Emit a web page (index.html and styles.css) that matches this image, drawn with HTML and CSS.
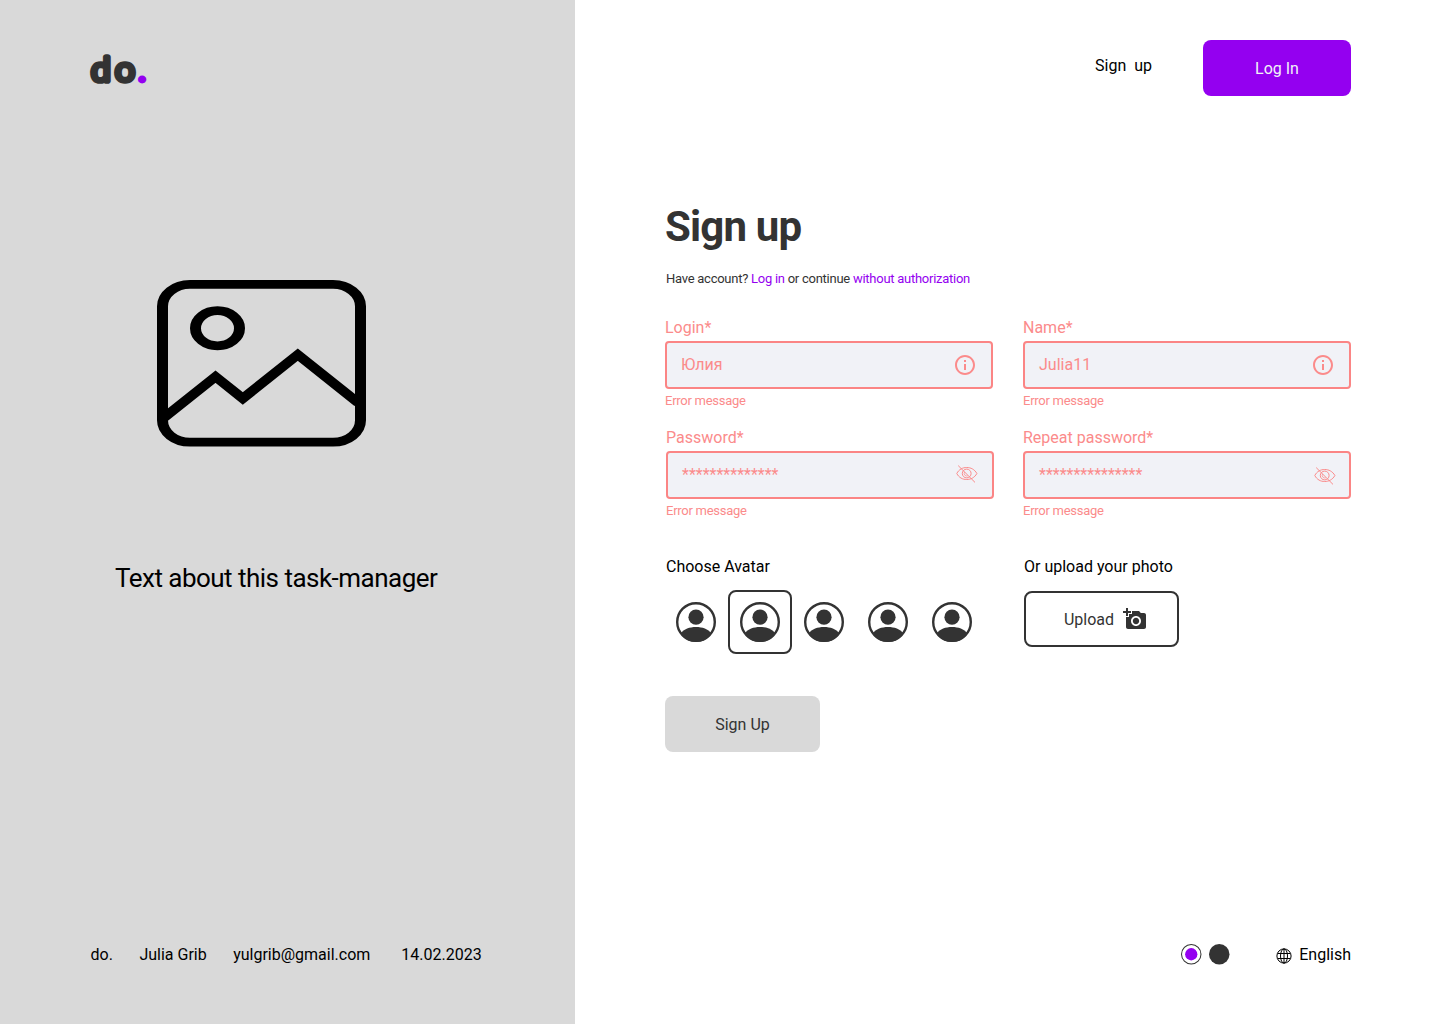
FILE: index.html
```html
<!DOCTYPE html>
<html lang="en">
<head>
<meta charset="utf-8">
<title>Sign up</title>
<link rel="stylesheet" href="styles.css">
</head>
<body>
<svg class="sprite" aria-hidden="true">
  <symbol id="info" viewBox="0 0 24 24"><path fill="currentColor" d="M11 7h2v2h-2zm0 4h2v6h-2zm1-9C6.480 2 2 6.480 2 12s4.480 10 10 10 10-4.480 10-10S17.520 2 12 2zm0 18c-4.410 0-8-3.590-8-8s3.590-8 8-8 8 3.590 8 8-3.590 8-8 8z"/></symbol>
  <symbol id="eye-off" viewBox="0 0 22 18"><g fill="none" stroke="currentColor"><path d="M.8 8.500C3 4.300 6.600 2.500 10.700 2.500S18.500 4.300 20.900 8.500c-2.400 4.200-6.100 6-10.200 6S3 12.700.8 8.500z"/><circle cx="10.700" cy="8.500" r="4.400"/><path stroke-width=".7" d="M8.600 7a2.600 2.600 0 0 0 3.200 3.800"/><path d="M2.200.6l16.800 16.800"/></g></symbol>
  <symbol id="avatar" viewBox="0 0 40 40"><circle cx="20" cy="20" r="18.800" fill="none" stroke="currentColor" stroke-width="2.400"/><circle cx="20" cy="15.200" r="7.600" fill="currentColor"/><path fill="currentColor" d="M4.500 31.500C8 27 13.500 25 20 25s12 2 15.500 6.500C32 37 26.500 40 20 40S8 37 4.500 31.500z"/></symbol>
</svg>
<div class="page">
  <aside class="intro">
    <svg class="logo" viewBox="0 0 60 36"><text class="logo-text" transform="scale(1.130 1.060)" x="1 22.400 42.500" y="27.700">do<tspan class="logo-dot">.</tspan></text></svg>
    <svg class="picture" viewBox="0 0 19 19" preserveAspectRatio="none"><g fill="none" stroke="#000"><rect x=".5" y=".5" width="18" height="18" rx="2.500"/><circle cx="5.500" cy="5.500" r="2"/><path d="M.5 15.850 5.320 11.030 7.800 13.510 12.800 8.510 18.300 14.010"/></g></svg>
    <p class="about">Text about this task-manager</p>
    <footer class="credits"><span>do.</span><span>Julia Grib</span><span>yulgrib@gmail.com</span><span>14.02.2023</span></footer>
  </aside>
  <main class="main">
    <nav class="nav"><a class="nav-link">Sign&nbsp; up</a><button class="btn primary">Log In</button></nav>
    <h1 class="title">Sign up</h1>
    <p class="hint">Have account? <a>Log in</a> or continue <a>without authorization</a></p>
    <form class="fields">
      <div class="field"><label>Login*</label><div class="input"><span>Юлия</span><svg class="info"><use href="#info"/></svg></div><small>Error message</small></div>
      <div class="field"><label>Name*</label><div class="input"><span>Julia11</span><svg class="info"><use href="#info"/></svg></div><small>Error message</small></div>
      <div class="field shifted"><label>Password*</label><div class="input"><span>**************</span><svg class="eye raised"><use href="#eye-off"/></svg></div><small>Error message</small></div>
      <div class="field"><label>Repeat password*</label><div class="input"><span>***************</span><svg class="eye low"><use href="#eye-off"/></svg></div><small>Error message</small></div>
    </form>
    <div class="photo">
      <section>
        <p class="caption">Choose Avatar</p>
        <div class="avatars">
          <div class="avatar"><svg><use href="#avatar"/></svg></div>
          <div class="avatar selected"><svg><use href="#avatar"/></svg></div>
          <div class="avatar"><svg><use href="#avatar"/></svg></div>
          <div class="avatar"><svg><use href="#avatar"/></svg></div>
          <div class="avatar"><svg><use href="#avatar"/></svg></div>
        </div>
      </section>
      <section>
        <p class="caption">Or upload your photo</p>
        <button class="btn upload">Upload<svg class="camera" viewBox="0 0 24 24"><path fill="currentColor" d="M3 4V1h2v3h3v2H5v3H3V6H0V4h3zm3 6V7h3V4h7l1.830 2H21c1.100 0 2 .9 2 2v12c0 1.100-.9 2-2 2H5c-1.100 0-2-.9-2-2V10h3zm7 9c2.760 0 5-2.240 5-5s-2.240-5-5-5-5 2.240-5 5 2.240 5 5 5zm-3.200-5c0 1.770 1.430 3.200 3.200 3.200s3.200-1.430 3.200-3.200-1.430-3.200-3.200-3.200-3.200 1.430-3.200 3.200z"/></svg></button>
      </section>
    </div>
    <button class="btn submit">Sign Up</button>
    <footer class="settings">
      <svg class="theme" viewBox="0 0 20 20"><circle cx="10" cy="10" r="9.500" fill="#fff" stroke="#333"/><circle cx="10" cy="10" r="6" fill="#9400f0"/></svg>
      <svg class="theme" viewBox="0 0 20 20"><circle cx="10" cy="10" r="10" fill="#333"/></svg>
      <svg class="globe" viewBox="0 0 16 16"><g fill="none" stroke="#000"><circle cx="8" cy="8" r="7.100"/><ellipse cx="8" cy="8" rx="3.500" ry="7.100"/><path d="M8 .9v14.200M1.700 5.500h12.600M1.700 10.500h12.600"/></g></svg>
      <span>English</span>
    </footer>
  </main>
</div>
</body>
</html>
```
FILE: styles.css
```css
* { box-sizing: border-box; margin: 0; }
body { font: 16px/24px Roboto, sans-serif; color: #000; background: #fff; }
.sprite { display: none; }
svg { display: block; flex: none; }
.page { display: grid; grid-template-columns: 575px 1fr; height: 1024px; }

.intro { display: flex; flex-direction: column; padding: 52px 90px 57px 90px; background: #d9d9d9; }
.logo { width: 60px; height: 36px; overflow: visible; }
.logo-text { font: 300 31px Lato, sans-serif; fill: #333; stroke: #333; stroke-width: 5.400px; stroke-linejoin: round; }
.logo-dot { fill: #9400f0; stroke: #9400f0; stroke-width: 4.500px; }
.picture { width: 209px; height: 166.600px; margin: 192px 0 0 67px; }
.about { margin: 111.400px 0 0 25px; font-size: 26px; line-height: 40px; letter-spacing: -.52px; white-space: nowrap; }
.credits { display: flex; margin: auto 0 0 .5px; }
.credits span:nth-child(2) { margin-left: 26.500px; }
.credits span:nth-child(3) { margin-left: 26.500px; }
.credits span:nth-child(4) { margin-left: 31px; }

.main { display: flex; flex-direction: column; padding: 40px 89px 57px 90px; }
.nav { display: flex; justify-content: flex-end; align-items: flex-start; gap: 51px; }
.nav-link { margin-top: 14px; }
.btn { display: flex; align-items: center; justify-content: center; height: 56px; padding: 1px 0 0; border: 0; border-radius: 8px; font: inherit; color: #333; }
.primary { width: 148px; background: #9400f0; color: #f1f2f7; }
.title { margin-top: 107px; font-size: 42px; line-height: 48px; font-weight: 700; letter-spacing: -.84px; color: #333; }
.hint { margin: 18px 0 0 1px; font-size: 13px; line-height: 20px; letter-spacing: -.26px; color: #333; }
.hint a { color: #9400f0; }

.fields { display: grid; grid-template-columns: 328px 328px; column-gap: 30px; margin-top: 27px; color: #fb8b8b; }
.field { display: flex; flex-direction: column; height: 110px; }
.shifted { margin: 0 -1px 0 1px; }
.input { display: flex; align-items: center; justify-content: space-between; height: 48px; margin-top: 1px; padding: 0 14px; border: 2px solid #fb8585; border-radius: 4px; background: #f1f2f7; }
.field small { margin-top: 2px; font-size: 13px; line-height: 20px; letter-spacing: -.26px; }
.info { width: 24px; height: 24px; }
.eye { width: 22px; height: 18px; }
.raised { margin-top: -2px; }
.low { margin: 2px -1px 0 0; }

.photo { display: grid; grid-template-columns: 358px 1fr; margin: 19px 0 0 1px; }
.avatars { display: flex; margin: 11px 0 0 -2px; }
.avatar { display: flex; align-items: center; justify-content: center; width: 64px; height: 64px; border-radius: 8px; color: #333; }
.avatar svg { width: 40px; height: 40px; }
.selected { border: 2px solid #333; }
.upload { width: 155px; margin-top: 12px; padding-left: 8px; gap: 9px; border: 2px solid #333; background: #fff; }
.camera { width: 24px; height: 24px; margin-top: -1px; }
.submit { width: 155px; margin-top: 42px; background: #d9d9d9; }

.settings { display: flex; align-items: center; justify-content: flex-end; margin-top: auto; }
.theme { width: 20.500px; height: 20.500px; margin: -1px 7.500px 0 0; }
.globe { width: 16px; height: 16px; margin: 1px 7.500px 0 38.600px; }
```
